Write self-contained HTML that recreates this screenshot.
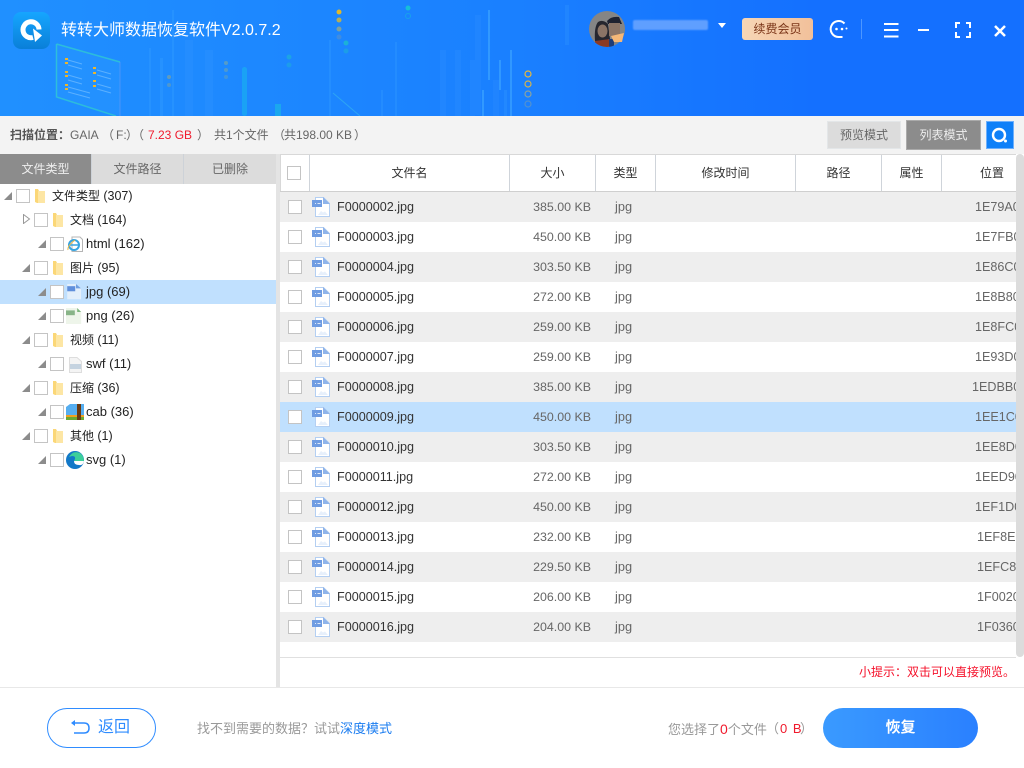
<!DOCTYPE html>
<html lang="zh"><head><meta charset="utf-8"><title>转转大师数据恢复软件</title>
<style>
*{box-sizing:border-box;margin:0;padding:0}
html,body{width:1024px;height:768px;overflow:hidden;background:#fff}
body{position:relative;font:12px "Liberation Sans","Noto Sans CJK SC",sans-serif;color:#333}
.a{position:absolute;white-space:nowrap}
#head{left:0;top:0;width:1024px;height:116px;background:linear-gradient(90deg,#2090ff 0,#1a80ff 50%,#1470ff 80%,#1470ff 100%);overflow:hidden}
.cb{position:absolute;width:14px;height:14px;border:1px solid #c4c4c4;background:#fff}
.tri{position:absolute;width:0;height:0;border-style:solid;border-width:0 0 8px 8px;border-color:transparent transparent #8c8c8c transparent}
.t{position:absolute;line-height:16px;color:#222;white-space:nowrap}
.l{font-size:13px}
.m{font-size:12.5px}
.tc{font-family:"Noto Sans CJK TC",sans-serif}
.hd{position:absolute;top:155px;height:36px;line-height:36px;text-align:center;color:#333;border-right:1px solid #cfd4da}
.row{position:absolute;left:280px;width:736px;height:30px;overflow:hidden}
.row .cb{left:8px;top:8px}
.row svg{position:absolute;left:32px;top:5px}
.row span{position:absolute;top:0;line-height:30px;white-space:nowrap}
.n{left:57px;color:#333;font-size:12.6px}
.s{right:425px;color:#666;font-size:12.4px}
.y{left:335px;color:#666;font-size:12.8px}
.p{color:#666;font-size:12.6px}
.g{background:#eee}
.tab{position:absolute;top:154px;height:30px;line-height:30px;text-align:center;background:#dcdcdc;color:#666;border-right:1px solid #cdd2d8}
.bar{color:#666;position:absolute;top:127px;line-height:16px;white-space:nowrap}
</style></head><body>
<svg width="0" height="0" style="position:absolute"><defs>
<symbol id="f" viewBox="0 0 18 20"><path d="M3.500.5H11.500L17.500 6.500V19.500H3.500Z" fill="#fff" stroke="#b4cff2"/><path d="M11 0L18 7H11Z" fill="#8fb4ea"/><rect x="0" y="3" width="10" height="7" fill="#6f9ce2"/><path d="M3 6.500h1M5.500 6.500h3" stroke="#dbe8fa"/><path d="M6 18l3-4 2 1.500 2-1 3 3.500z" fill="#e6effb"/></symbol>
<symbol id="d" viewBox="0 0 10 16"><path d="M0 1H3L4 3H9.500V15H2L0 14Z" fill="#fbd777"/><path d="M3 3H10V15H3Z" fill="#fde6a4"/></symbol>
<clipPath id="av"><circle cx="18" cy="18" r="18"/></clipPath>
</defs></svg>

<div id="head" class="a">
<svg width="1024" height="116" style="position:absolute;left:0;top:0">
<g fill="#5ec6ff" opacity=".12">
<rect x="149" y="48" width="2" height="68"/><rect x="160" y="58" width="3" height="58"/><rect x="172" y="10" width="2" height="106"/><rect x="329" y="40" width="2" height="76"/><rect x="395" y="42" width="2" height="74"/><rect x="381" y="90" width="2" height="26"/><rect x="504" y="90" width="3" height="26"/><rect x="565" y="5" width="4" height="40"/>
</g>
<g fill="#5ec6ff" opacity=".35"><rect x="488" y="10" width="2" height="70"/><rect x="499" y="60" width="2" height="30"/><rect x="510" y="50" width="2" height="66"/><rect x="482" y="90" width="2" height="26"/></g>
<rect x="242" y="67" width="5" height="49" rx="2.500" fill="#19b4ee" opacity=".6"/>
<rect x="275" y="104" width="6" height="12" fill="#19c1e0" opacity=".55"/>
<g fill="#73bfff" opacity=".07"><rect x="440" y="50" width="6" height="66"/><rect x="455" y="50" width="6" height="66"/><rect x="475" y="15" width="6" height="100"/><rect x="493" y="80" width="6" height="36"/><rect x="470" y="60" width="5" height="56"/><rect x="185" y="40" width="8" height="76"/><rect x="205" y="50" width="8" height="66"/></g>
<g><circle cx="339" cy="12" r="2.500" fill="#e0b82a"/><circle cx="339" cy="20" r="2.500" fill="#c7b245" opacity=".9"/><circle cx="339" cy="29" r="2.500" fill="#a6ad76" opacity=".7"/><circle cx="339" cy="37" r="2.500" fill="#8f9f9f" opacity=".3"/>
<circle cx="346" cy="43" r="2.500" fill="#1dbbcd" opacity=".8"/><circle cx="346" cy="51" r="2.500" fill="#1dbbcd" opacity=".45"/><circle cx="408" cy="8" r="2.500" fill="#16bfd8"/><circle cx="408" cy="16" r="2.500" fill="none" stroke="#16bfd8" opacity=".5"/>
<circle cx="289" cy="57" r="2.500" fill="#1dbbcd" opacity=".55"/><circle cx="289" cy="65" r="2.500" fill="#1dbbcd" opacity=".4"/>
<circle cx="226" cy="63" r="2" fill="#6ea4b0" opacity=".7"/><circle cx="226" cy="70" r="2" fill="#6ea4b0" opacity=".6"/><circle cx="226" cy="77" r="2" fill="#6ea4b0" opacity=".45"/><circle cx="169" cy="77" r="2" fill="#7da3a0" opacity=".7"/><circle cx="169" cy="85" r="2" fill="#7da3a0" opacity=".5"/>
<g fill="none" stroke-width="1.200"><circle cx="528" cy="74" r="3" stroke="#e8b93a"/><circle cx="528" cy="84" r="3" stroke="#d3b44e"/><circle cx="528" cy="94" r="3" stroke="#a6ad86" opacity=".8"/><circle cx="528" cy="104" r="3" stroke="#a6ad86" opacity=".4"/></g></g>
<path d="M56 44L120 62V116L56 97Z" fill="#5ec8ff" opacity=".08"/>
<path d="M56.500 44L120 62M56.500 44V97L116 116" fill="none" stroke="#34d6c8" stroke-width="1.500" opacity=".65"/>
<path d="M120 62V116" stroke="#8aa0f0" opacity=".4"/>
<g stroke="#9fd6ff" stroke-width="1" opacity=".45"><path d="M68 60L82 64M68 65L82 69M68 75L82 79M68 80L82 84M68 87L90 93M68 92L90 98M97 70L111 74M97 75L111 79M97 84L111 88M97 89L111 93"/></g>
<g fill="#ecb52c"><rect x="65" y="58" width="3" height="2"/><rect x="65" y="62" width="3" height="2"/><rect x="65" y="71" width="3" height="2"/><rect x="65" y="75" width="3" height="2"/><rect x="65" y="84" width="3" height="2"/><rect x="65" y="88" width="3" height="2"/><rect x="93" y="67" width="3" height="2"/><rect x="93" y="72" width="3" height="2"/><rect x="93" y="80" width="3" height="2"/><rect x="93" y="85" width="3" height="2"/></g>
<path d="M333 93L360 116" stroke="#3ec5e8" opacity=".5"/>
</svg>
<svg class="a" style="left:13px;top:12px" width="37" height="37" viewBox="0 0 37 37"><defs><linearGradient id="lg" x1="0" y1="0" x2="0" y2="1"><stop offset="0" stop-color="#16a6ff"/><stop offset="1" stop-color="#0a7fd8"/></linearGradient></defs><rect width="37" height="37" rx="8" fill="url(#lg)"/><path d="M20 25.500A8 8 0 1 1 26 17.500" fill="none" stroke="#fff" stroke-width="5"/><path d="M20 16.500L29 23.500L22 30Z" fill="#fff"/></svg>
<div class="a" style="left:61px;top:20px;font-size:16px;line-height:22px;color:#fff">转转大师数据恢复软件V2.0.7.2</div>
<svg class="a" style="left:589px;top:11px" width="37" height="36" viewBox="0 0 37 36"><circle cx="18" cy="18" r="18" fill="#858585"/><g clip-path="url(#av)"><path d="M6 30Q14 25 24 30V36H6Z" fill="#8a3a25"/><path d="M6 30Q5 16 9 11Q14 8 19 13L21 28Z" fill="#26262e"/><ellipse cx="13.500" cy="20" rx="5" ry="6.500" fill="#8b7466"/><path d="M20 28H25V36H20Z" fill="#1e3c78"/></g><path d="M18 10Q22 5 30 6L33 13H19Z" fill="#1f2230"/><rect x="20" y="12" width="11" height="13" fill="#8b7466"/><path d="M22 25L35 22L33 31H25Z" fill="#f4b778"/></svg>
<div class="a" style="left:633px;top:20px;width:75px;height:10px;background:#5f9fff;border-radius:2px;filter:blur(.8px)"></div>
<div class="a" style="left:718px;top:23px;border:4px solid transparent;border-top:5px solid #fff;border-bottom:0"></div>
<div class="a" style="left:742px;top:18px;width:71px;height:22px;border-radius:3px;background:linear-gradient(90deg,#f7d6b6,#f1c09a);color:#7a3417;text-align:center;line-height:22px">续费会员</div>
<svg class="a" style="left:828px;top:19px" width="22" height="22" viewBox="0 0 22 22"><path d="M16.500 4.500A8 8 0 1 0 10.500 18H14.500" fill="none" stroke="#fff" stroke-width="2"/><circle cx="18.500" cy="9.500" r="1" fill="#fff"/><circle cx="8.500" cy="10" r="1.300" fill="#fff"/><circle cx="14" cy="10" r="1.300" fill="#fff"/></svg>
<div class="a" style="left:861px;top:19px;width:1px;height:20px;background:#4d97ff"></div>
<svg class="a" style="left:883px;top:22px" width="132" height="16" viewBox="0 0 132 16" fill="none" stroke="#fff" stroke-width="2">
<path d="M1 2H15.500M1 8H15.500M1 14.500H15.500"/><path d="M35 8H46"/>
<path d="M73 6V1H77M83 1H87V6M87 10V15H83M77 15H73V10"/>
<path d="M112 4L122 14M122 4L112 14" stroke-width="2.500"/></svg>
</div>

<!-- toolbar -->
<div class="a" style="left:0;top:116px;width:1024px;height:38px;background:#f3f3f3"></div>
<div class="bar" style="left:10px;font-weight:700;color:#555">扫描位置<span class="tc">：</span></div>
<div class="bar" style="left:70px">GAIA</div>
<div class="bar" style="left:102px">（</div>
<div class="bar" style="left:116px">F:</div>
<div class="bar" style="left:126px">）（</div>
<div class="bar" style="left:148px;color:#f01a2c">7.23 GB</div>
<div class="bar" style="left:197px">）</div>
<div class="bar" style="left:214px">共1个文件</div>
<div class="bar" style="left:273px">（</div>
<div class="bar" style="left:284px">共198.00 KB</div>
<div class="bar" style="left:354px">）</div>
<div class="a" style="left:827px;top:121px;width:74px;height:28px;background:#dcdcdc;border:1px solid #e3e6e8;color:#666;text-align:center;line-height:26px">预览模式</div>
<div class="a" style="left:906px;top:120px;width:75px;height:30px;background:#8c8c8c;border:1px solid #aaa;color:#eee;text-align:center;line-height:28px">列表模式</div>
<div class="a" style="left:986px;top:121px;width:28px;height:28px;background:#0f80f8;border:1px solid #6eb0fc"></div>
<svg class="a" style="left:990px;top:126px" width="20" height="20" viewBox="0 0 20 20"><circle cx="9" cy="9" r="6" fill="none" stroke="#fff" stroke-width="2.400"/><circle cx="15.500" cy="15" r="1.500" fill="#fff"/></svg>

<!-- left tabs -->
<div class="tab" style="left:0;width:92px;background:#8c8c8c;color:#eee">文件类型</div>
<div class="tab" style="left:92px;width:92px">文件路径</div>
<div class="tab" style="left:184px;width:92px;border-right:0">已删除</div>
<div class="a" style="left:276px;top:154px;width:4px;height:533px;background:#e4e4e4"></div>
<div class="a" style="left:0;top:280px;width:276px;height:24px;background:#c0e0fe"></div>

<!-- tree -->
<div class="tri" style="left:4px;top:192px"></div><div class="cb" style="left:16px;top:189px"></div><svg class="a" style="left:35px;top:188px" width="10" height="16"><use href="#d"/></svg><div class="t" style="left:52px;top:188px">文件类型 <span class="m">(307)</span></div>
<svg class="a" style="left:23px;top:214px" width="8" height="10"><path d="M.5.500L6.500 5L.5 9.500Z" fill="#fff" stroke="#999"/></svg><div class="cb" style="left:34px;top:213px"></div><svg class="a" style="left:53px;top:212px" width="10" height="16"><use href="#d"/></svg><div class="t" style="left:70px;top:212px">文档 <span class="m">(164)</span></div>
<div class="tri" style="left:38px;top:240px"></div><div class="cb" style="left:50px;top:237px"></div>
<svg class="a" style="left:67px;top:236px" width="16" height="16" viewBox="0 0 16 16"><path d="M5 1H13L15.500 3.500V15.500H5Z" fill="#fff" stroke="#b5b5b5"/><circle cx="7" cy="9" r="5" fill="none" stroke="#36a4e0" stroke-width="2"/><path d="M3 9H11" stroke="#36a4e0" stroke-width="1.500"/><path d="M1 14Q0 10 8 4" fill="none" stroke="#e8b94a"/></svg>
<div class="t l" style="left:86px;top:236px">html (162)</div>
<div class="tri" style="left:22px;top:264px"></div><div class="cb" style="left:34px;top:261px"></div><svg class="a" style="left:53px;top:260px" width="10" height="16"><use href="#d"/></svg><div class="t" style="left:70px;top:260px">图片 <span class="m">(95)</span></div>
<div class="tri" style="left:38px;top:288px"></div><div class="cb" style="left:50px;top:285px"></div><svg class="a" style="left:67px;top:284px" width="15" height="16" viewBox="0 0 20 22"><path d="M0 0H12L19 6V21H0Z" fill="#e3effb"/><path d="M12 0L19 6H12Z" fill="#6f9fe0"/><rect y="3" width="11" height="7" fill="#5f8fdc"/></svg><div class="t l" style="left:86px;top:284px">jpg (69)</div>
<div class="tri" style="left:38px;top:312px"></div><div class="cb" style="left:50px;top:309px"></div><svg class="a" style="left:66px;top:308px" width="16" height="16" viewBox="0 0 20 20"><path d="M0 0H14L19 5V20H0Z" fill="#eef5ea"/><path d="M14 0L19 5H14Z" fill="#7fb77f"/><rect y="3" width="11" height="6" fill="#88b488"/></svg><div class="t l" style="left:86px;top:308px">png (26)</div>
<div class="tri" style="left:22px;top:336px"></div><div class="cb" style="left:34px;top:333px"></div><svg class="a" style="left:53px;top:332px" width="10" height="16"><use href="#d"/></svg><div class="t" style="left:70px;top:332px">视频 <span class="m">(11)</span></div>
<div class="tri" style="left:38px;top:360px"></div><div class="cb" style="left:50px;top:357px"></div><svg class="a" style="left:69px;top:357px" width="13" height="16" viewBox="0 0 13 16"><path d="M.5.500H8L12.500 4.500V15.500H.5Z" fill="#f4f4f4" stroke="#ddd"/><rect x="1" y="7" width="11" height="5" fill="#c5d3e0"/></svg><div class="t l" style="left:86px;top:356px">swf (11)</div>
<div class="tri" style="left:22px;top:384px"></div><div class="cb" style="left:34px;top:381px"></div><svg class="a" style="left:53px;top:380px" width="10" height="16"><use href="#d"/></svg><div class="t" style="left:70px;top:380px">压缩 <span class="m">(36)</span></div>
<div class="tri" style="left:38px;top:408px"></div><div class="cb" style="left:50px;top:405px"></div><svg class="a" style="left:66px;top:404px" width="18" height="16" viewBox="0 0 18 16"><path d="M0 3L4 0H18V11H0Z" fill="#56aef0"/><rect y="11" width="18" height="2" fill="#f0a020"/><rect y="13" width="18" height="3" fill="#6ba834"/><rect x="11" y="0" width="4" height="16" fill="#6b3a12"/></svg><div class="t l" style="left:86px;top:404px">cab (36)</div>
<div class="tri" style="left:22px;top:432px"></div><div class="cb" style="left:34px;top:429px"></div><svg class="a" style="left:53px;top:428px" width="10" height="16"><use href="#d"/></svg><div class="t" style="left:70px;top:428px">其他 <span class="m">(1)</span></div>
<div class="tri" style="left:38px;top:456px"></div><div class="cb" style="left:50px;top:453px"></div><svg class="a" style="left:66px;top:451px" width="18" height="18" viewBox="0 0 18 18"><circle cx="9" cy="9" r="9" fill="#1278c8"/><path d="M3 6Q7 -1 14 2Q18 5 18 10H8Q11 5 6 5Z" fill="#3ccf9a"/><path d="M8 10H18Q17 15 13 14Q8 14 8 10Z" fill="#fff"/></svg><div class="t l" style="left:86px;top:452px">svg (1)</div>

<!-- table header -->
<div class="a" style="left:280px;top:154px;width:736px;height:38px;background:#fff;border-top:1px solid #d8d8d8;border-bottom:1px solid #cfcfcf"></div>
<div class="a" style="left:280px;top:155px;width:1px;height:36px;background:#d8d8d8"></div>
<div class="cb" style="left:287px;top:166px"></div>
<div class="hd" style="left:280px;width:30px"></div>
<div class="hd" style="left:310px;width:200px">文件名</div>
<div class="hd" style="left:510px;width:86px">大小</div>
<div class="hd" style="left:596px;width:60px">类型</div>
<div class="hd" style="left:656px;width:140px">修改时间</div>
<div class="hd" style="left:796px;width:86px">路径</div>
<div class="hd" style="left:882px;width:60px">属性</div>
<div class="a" style="left:980px;top:155px;line-height:36px">位置</div>

<!-- rows -->
<div class="row g" style="top:192px"><i class="cb"></i><svg width="18" height="20"><use href="#f"/></svg><span class="n">F0000002.jpg</span><span class="s">385.00 KB</span><span class="y">jpg</span><span class="p" style="left:695px">1E79A0C</span></div>
<div class="row" style="top:222px"><i class="cb"></i><svg width="18" height="20"><use href="#f"/></svg><span class="n">F0000003.jpg</span><span class="s">450.00 KB</span><span class="y">jpg</span><span class="p" style="left:695px">1E7FB0C</span></div>
<div class="row g" style="top:252px"><i class="cb"></i><svg width="18" height="20"><use href="#f"/></svg><span class="n">F0000004.jpg</span><span class="s">303.50 KB</span><span class="y">jpg</span><span class="p" style="left:695px">1E86C0C</span></div>
<div class="row" style="top:282px"><i class="cb"></i><svg width="18" height="20"><use href="#f"/></svg><span class="n">F0000005.jpg</span><span class="s">272.00 KB</span><span class="y">jpg</span><span class="p" style="left:695px">1E8B80C</span></div>
<div class="row g" style="top:312px"><i class="cb"></i><svg width="18" height="20"><use href="#f"/></svg><span class="n">F0000006.jpg</span><span class="s">259.00 KB</span><span class="y">jpg</span><span class="p" style="left:695px">1E8FC0C</span></div>
<div class="row" style="top:342px"><i class="cb"></i><svg width="18" height="20"><use href="#f"/></svg><span class="n">F0000007.jpg</span><span class="s">259.00 KB</span><span class="y">jpg</span><span class="p" style="left:695px">1E93D0C</span></div>
<div class="row g" style="top:372px"><i class="cb"></i><svg width="18" height="20"><use href="#f"/></svg><span class="n">F0000008.jpg</span><span class="s">385.00 KB</span><span class="y">jpg</span><span class="p" style="left:692px">1EDBB0C</span></div>
<div class="row" style="top:402px;background:#c0e0fe"><i class="cb"></i><svg width="18" height="20"><use href="#f"/></svg><span class="n">F0000009.jpg</span><span class="s">450.00 KB</span><span class="y">jpg</span><span class="p" style="left:695px">1EE1C0C</span></div>
<div class="row" style="top:432px;background:#eee"><i class="cb"></i><svg width="18" height="20"><use href="#f"/></svg><span class="n">F0000010.jpg</span><span class="s">303.50 KB</span><span class="y">jpg</span><span class="p" style="left:695px">1EE8D0C</span></div>
<div class="row" style="top:462px"><i class="cb"></i><svg width="18" height="20"><use href="#f"/></svg><span class="n">F0000011.jpg</span><span class="s">272.00 KB</span><span class="y">jpg</span><span class="p" style="left:695px">1EED90C</span></div>
<div class="row g" style="top:492px"><i class="cb"></i><svg width="18" height="20"><use href="#f"/></svg><span class="n">F0000012.jpg</span><span class="s">450.00 KB</span><span class="y">jpg</span><span class="p" style="left:695px">1EF1D0C</span></div>
<div class="row" style="top:522px"><i class="cb"></i><svg width="18" height="20"><use href="#f"/></svg><span class="n">F0000013.jpg</span><span class="s">232.00 KB</span><span class="y">jpg</span><span class="p" style="left:697px">1EF8E0C</span></div>
<div class="row g" style="top:552px"><i class="cb"></i><svg width="18" height="20"><use href="#f"/></svg><span class="n">F0000014.jpg</span><span class="s">229.50 KB</span><span class="y">jpg</span><span class="p" style="left:697px">1EFC80C</span></div>
<div class="row" style="top:582px"><i class="cb"></i><svg width="18" height="20"><use href="#f"/></svg><span class="n">F0000015.jpg</span><span class="s">206.00 KB</span><span class="y">jpg</span><span class="p" style="left:697px">1F0020C</span></div>
<div class="row g" style="top:612px"><i class="cb"></i><svg width="18" height="20"><use href="#f"/></svg><span class="n">F0000016.jpg</span><span class="s">204.00 KB</span><span class="y">jpg</span><span class="p" style="left:697px">1F0360C</span></div>

<!-- scrollbar -->
<div class="a" style="left:1016px;top:154px;width:8px;height:503px;background:#dcdcdc;border-radius:4px"></div>
<div class="a" style="left:280px;top:657px;width:736px;height:1px;background:#e0e0e0"></div>
<div class="a tc" style="left:859px;top:664px;line-height:16px;color:#f5102a;font-family:'Noto Sans CJK SC',sans-serif">小提示<span class="tc">：</span>双击可以直接预览。</div>
<div class="a" style="left:0;top:687px;width:1024px;height:1px;background:#e8e8e8"></div>

<!-- footer -->
<div class="a" style="left:47px;top:708px;width:109px;height:40px;border:1px solid #2f8cff;border-radius:20px;background:#fff"></div>
<svg class="a" style="left:70px;top:719px" width="20" height="16" viewBox="0 0 20 16" fill="none" stroke="#2f8cff" stroke-width="1.500"><path d="M3 4H14Q19 4 19 9Q19 14 14 14H4"/><path d="M5 1V7L1 4Z" fill="#2f8cff" stroke="none"/></svg>
<div class="a" style="left:98px;top:718px;font-size:16px;line-height:20px;color:#2f8cff">返回</div>
<div class="a" style="left:197px;top:720px;font-size:13px;line-height:16px;color:#999">找不到需要的数据<span class="tc">？</span>试试<span style="color:#1a7cf0">深度模式</span></div>
<div class="a" style="left:668px;top:721px;font-size:13px;line-height:16px;color:#999">您选择了<span style="color:#f01a2c;font-size:14px">0</span>个文件</div>
<div class="a" style="left:766px;top:721px;font-size:13px;line-height:16px;color:#999">（</div>
<div class="a" style="left:780px;top:721px;font-size:13px;line-height:16px;color:#f01a2c;word-spacing:2px">0 B</div>
<div class="a" style="left:800px;top:721px;font-size:13px;line-height:16px;color:#999">）</div>
<div class="a" style="left:823px;top:708px;width:155px;height:40px;border-radius:20px;background:linear-gradient(90deg,#3a9aff,#2a80ff);color:#fff;text-align:center;line-height:40px;font-size:15px;font-weight:700">恢复</div>
</body></html>
